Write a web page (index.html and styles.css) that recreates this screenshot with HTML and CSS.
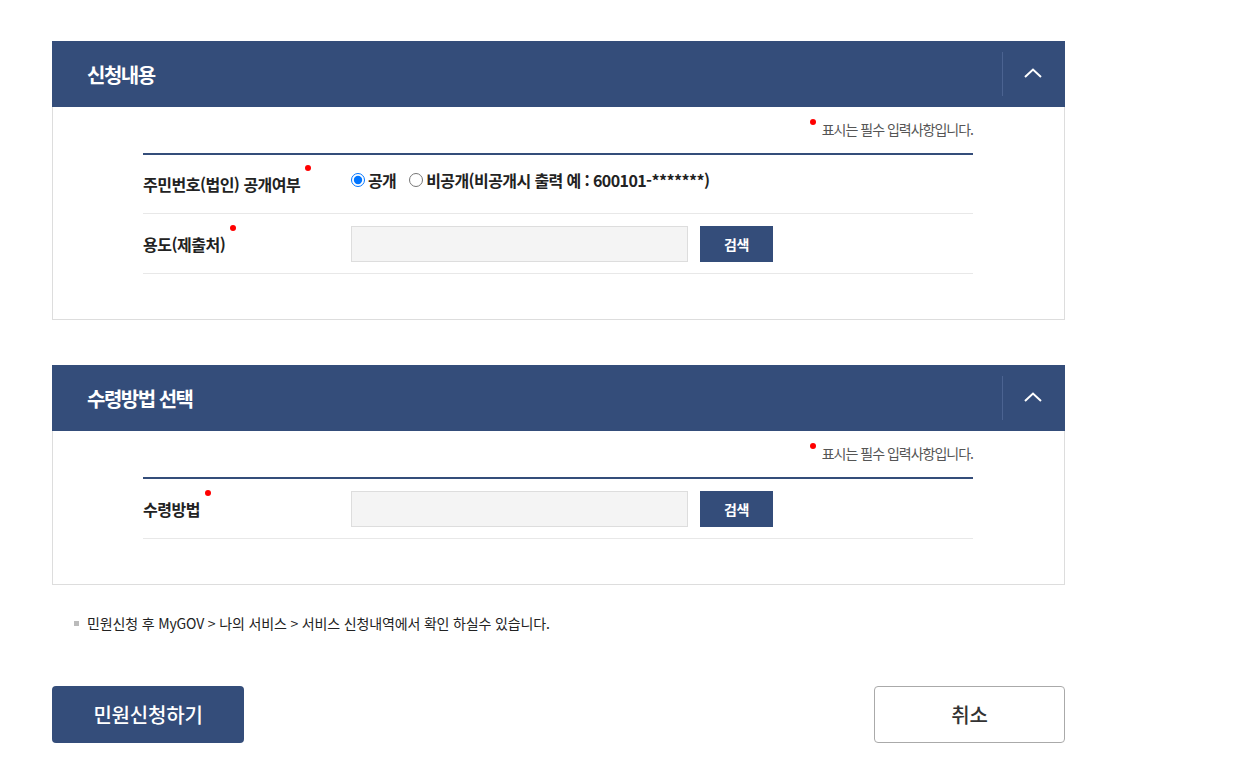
FILE: index.html
```html
<!DOCTYPE html>
<html lang="ko">
<head>
<meta charset="utf-8">
<title>민원신청</title>
<link rel="stylesheet" href="styles.css">
</head>
<body>
<div class="page">
  <section class="panel">
    <div class="panel-head">
      <h2 class="panel-title">신청내용</h2>
      <button class="toggle" type="button" aria-label="접기">
        <svg width="18" height="10" viewBox="0 0 18 10"><path d="M1 9 L9 1.5 L17 9" fill="none" stroke="#fff" stroke-width="2"/></svg>
      </button>
    </div>
    <div class="panel-body">
      <p class="req-note"><span class="dot"></span>표시는 필수 입력사항입니다.</p>
      <div class="form-table">
        <div class="form-row">
          <div class="label">주민번호(법인) 공개여부<span class="dot"></span></div>
          <div class="value radios">
            <label class="radio"><input type="radio" name="open" checked>공개</label>
            <label class="radio"><input type="radio" name="open">비공개(비공개시 출력 예 : 600101-*******)</label>
          </div>
        </div>
        <div class="form-row input-row">
          <div class="label">용도(제출처)<span class="dot"></span></div>
          <div class="value">
            <input class="field" type="text">
            <button class="btn-search" type="button">검색</button>
          </div>
        </div>
      </div>
    </div>
  </section>

  <section class="panel">
    <div class="panel-head">
      <h2 class="panel-title">수령방법 선택</h2>
      <button class="toggle" type="button" aria-label="접기">
        <svg width="18" height="10" viewBox="0 0 18 10"><path d="M1 9 L9 1.5 L17 9" fill="none" stroke="#fff" stroke-width="2"/></svg>
      </button>
    </div>
    <div class="panel-body">
      <p class="req-note"><span class="dot"></span>표시는 필수 입력사항입니다.</p>
      <div class="form-table">
        <div class="form-row input-row">
          <div class="label">수령방법<span class="dot"></span></div>
          <div class="value">
            <input class="field" type="text">
            <button class="btn-search" type="button">검색</button>
          </div>
        </div>
      </div>
    </div>
  </section>

  <p class="info"><span class="bullet"></span>민원신청 후 MyGOV &gt; 나의 서비스 &gt; 서비스 신청내역에서 확인 하실수 있습니다.</p>

  <div class="actions">
    <button class="btn-primary" type="button">민원신청하기</button>
    <button class="btn-cancel" type="button">취소</button>
  </div>
</div>
</body>
</html>
```

FILE: styles.css
```css
* { box-sizing: border-box; }
html, body { margin: 0; padding: 0; background: #fff; }
body {
  font-family: "Noto Sans CJK KR", "Noto Sans", sans-serif;
  color: #222;
}
.page {
  width: 1013px;
  margin-left: 52px;
  padding-top: 41px;
}
.panel + .panel { margin-top: 45px; }
.panel-head {
  height: 66px;
  background: #344d7a;
  display: flex;
  align-items: center;
  justify-content: space-between;
}
.panel-title {
  margin: 0;
  padding-left: 35px;
  font-size: 20px;
  font-weight: 700;
  color: #fff;
  letter-spacing: -1.5px;
}
.toggle {
  width: 63px;
  height: 44px;
  border: 0;
  border-left: 1px solid #4b6391;
  background: transparent;
  padding: 0;
  display: flex;
  align-items: center;
  justify-content: center;
  cursor: pointer;
}
.toggle svg { margin-top: -2px; margin-left: -3px; }
.panel-body {
  border: 1px solid #ddd;
  border-top: 0;
  padding: 12px 91px 45px 90px;
}
.req-note {
  margin: 0 0 14px;
  text-align: right;
  font-size: 14px;
  line-height: 20px;
  color: #555;
  letter-spacing: -1px;
}
.dot {
  display: inline-block;
  width: 6px;
  height: 6px;
  border-radius: 50%;
  background: #f00;
  vertical-align: top;
}
.req-note .dot { margin: 0 6px 0 0; }
.form-table { border-top: 2px solid #344d7a; }
.form-row {
  display: flex;
  align-items: center;
  min-height: 59px;
  border-bottom: 1px solid #e8e8e8;
  padding: 11px 0;
}
.form-row.input-row { padding: 12px 0 11px; }
.label {
  width: 208px;
  flex: none;
  font-size: 16px;
  font-weight: 700;
  color: #222;
  letter-spacing: -0.5px;
  line-height: 22px;
  padding-top: 0;
}
.label .dot { margin: -8px 0 0 5px; }
.value {
  display: flex;
  align-items: center;
  gap: 12px;
}
.radios { gap: 13px; margin-top: -8px; }
.radio {
  display: flex;
  align-items: center;
  font-size: 16px;
  font-weight: 700;
  letter-spacing: -0.6px;
  color: #222;
}
.radio input {
  margin: 0 3px 0 0;
  width: 14px;
  height: 14px;
}
.field {
  width: 337px;
  height: 36px;
  border: 1px solid #ddd;
  background: #f4f4f4;
  padding: 0 10px;
  font: inherit;
}
.btn-search {
  width: 73px;
  height: 36px;
  border: 0;
  background: #344d7a;
  color: #fff;
  font-family: inherit;
  font-size: 14px;
  font-weight: 700;
  letter-spacing: -0.5px;
  cursor: pointer;
}
.info {
  margin: 28px 0 0;
  padding-left: 22px;
  font-size: 14px;
  line-height: 20px;
  color: #222;
  letter-spacing: -0.15px;
  display: flex;
  align-items: center;
}
.bullet {
  width: 5px;
  height: 5px;
  background: #bbb;
  margin-right: 8px;
  flex: none;
}
.actions {
  display: flex;
  justify-content: space-between;
  margin-top: 53px;
}
.btn-primary, .btn-cancel {
  width: 192px;
  height: 57px;
  border-radius: 4px;
  font-family: inherit;
  font-size: 20px;
  font-weight: 500;
  letter-spacing: -0.2px;
  cursor: pointer;
}
.btn-primary {
  background: #344d7a;
  border: 0;
  color: #fff;
}
.btn-cancel {
  background: #fff;
  border: 1px solid #aaa;
  color: #333;
  width: 191px;
}
```
